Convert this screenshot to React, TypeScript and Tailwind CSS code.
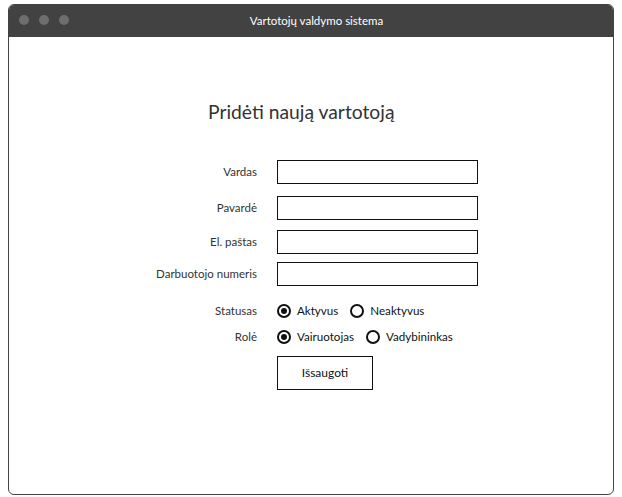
import React from "react";

const FONT = "font-['Lato','Noto_Sans',sans-serif]";

function Radio({ checked, label }: { checked?: boolean; label: string }) {
  return (
    <label className="flex items-center gap-[6px]">
      <span className="flex h-[14px] w-[14px] items-center justify-center rounded-full border-2 border-[#111]">
        {checked && <span className="h-[6px] w-[6px] rounded-full bg-[#111]" />}
      </span>
      <span className="text-[11.6px] text-[#111]">{label}</span>
    </label>
  );
}

const FIELDS = [
  { label: "Vardas", mt: "mt-0" },
  { label: "Pavardė", mt: "mt-[12px]" },
  { label: "El. paštas", mt: "mt-[10px]" },
  { label: "Darbuotojo numeris", mt: "mt-[8px]" },
];

function Label({ children }: { children: React.ReactNode }) {
  return (
    <span className="w-[120px] flex-shrink-0 whitespace-nowrap text-right text-[11.5px] text-[#333]">
      {children}
    </span>
  );
}

export default function App() {
  return (
    <div className={`h-[497px] w-[622px] bg-white pt-[4px] pl-[8px] ${FONT}`}>
      <div className="flex h-[491px] w-[606px] flex-col overflow-hidden rounded-[6px] border border-[#444] bg-white">
        {/* title bar */}
        <div className="relative flex h-[32px] flex-shrink-0 items-center justify-center bg-[#424242]">
          <div className="absolute left-[10px] top-[10px] flex gap-[10px]">
            <span className="h-[10px] w-[10px] rounded-full bg-[#6e6e6e]" />
            <span className="h-[10px] w-[10px] rounded-full bg-[#6e6e6e]" />
            <span className="h-[10px] w-[10px] rounded-full bg-[#6e6e6e]" />
          </div>
          <span className="pl-[11px] text-[11.5px] text-white">Vartotojų valdymo sistema</span>
        </div>

        {/* body */}
        <div className="flex flex-col pt-[61px]">
          <h1 className="pl-[199px] text-[19.3px] leading-[28px] text-[#333]">Pridėti naują vartotoją</h1>

          <div className="mt-[34px] flex flex-col pl-[128px]">
            {FIELDS.map((f) => (
              <div key={f.label} className={`flex items-center gap-[20px] ${f.mt}`}>
                <Label>{f.label}</Label>
                <div className="h-[24px] w-[201px] border border-[#111] bg-white" />
              </div>
            ))}

            <div className="mt-[16px] flex items-center gap-[20px]">
              <Label>Statusas</Label>
              <div className="flex items-center gap-[12px]">
                <Radio checked label="Aktyvus" />
                <Radio label="Neaktyvus" />
              </div>
            </div>
            <div className="mt-[9px] flex items-center gap-[20px]">
              <Label>Rolė</Label>
              <div className="flex items-center gap-[12px]">
                <Radio checked label="Vairuotojas" />
                <Radio label="Vadybininkas" />
              </div>
            </div>

            <div className="ml-[140px] mt-[10px]">
              <button className="h-[34px] w-[96px] border border-[#111] bg-white text-[12px] text-[#111]">
                Išsaugoti
              </button>
            </div>
          </div>
        </div>
      </div>
    </div>
  );
}
